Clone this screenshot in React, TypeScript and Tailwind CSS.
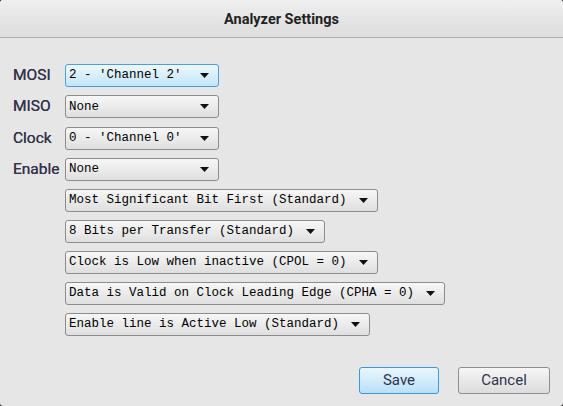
import React from "react";

const channels = [
  { label: "MOSI", value: "2 - 'Channel 2'", focused: true },
  { label: "MISO", value: "None" },
  { label: "Clock", value: "0 - 'Channel 0'" },
  { label: "Enable", value: "None" },
];

const options = [
  "Most Significant Bit First (Standard)",
  "8 Bits per Transfer (Standard)",
  "Clock is Low when inactive (CPOL = 0)",
  "Data is Valid on Clock Leading Edge (CPHA = 0)",
  "Enable line is Active Low (Standard)",
];

function Arrow() {
  return (
    <svg width="9" height="5" viewBox="0 0 9 5" className="shrink-0">
      <path d="M0 0h9L4.5 5z" fill="#111" />
    </svg>
  );
}

function Combo({ value, focused, wide }: { value: string; focused?: boolean; wide?: boolean }) {
  return (
    <div
      className={`h-[23px] flex items-center rounded-[3px] border pl-[3px] pr-[9px] ${
        wide ? "w-fit gap-3" : "w-[154px] justify-between"
      } ${
        focused
          ? "border-[#4a9fdc] bg-gradient-to-b from-[#eef8fe] to-[#c2e5f9]"
          : "border-[#8c8c8c] bg-gradient-to-b from-[#f7f7f7] to-[#dfdfdf]"
      }`}
    >
      <span className="text-[12.5px] leading-none text-[#000] whitespace-pre" style={{ fontFamily: "'Liberation Mono', monospace" }}>
        {value}
      </span>
      <Arrow />
    </div>
  );
}

export default function App() {
  return (
    <div className="w-[563px] h-[406px] bg-[#222]">
      <div className="w-full h-full rounded-[3px] overflow-hidden bg-[#e6e6e6] flex flex-col" style={{ fontFamily: "Roboto, sans-serif" }}>
        {/* title bar */}
        <div className="h-[38px] shrink-0 flex items-center justify-center border-b border-[#b2b2b2] bg-gradient-to-b from-[#efefef] to-[#dddddd]">
          <span className="text-[14.5px] font-bold text-[#222] pt-[2px]">Analyzer Settings</span>
        </div>

        <div className="flex flex-col pl-[12px] pt-[26px]">
          <div className="flex flex-col gap-[8px]">
            {channels.map((c) => (
              <div key={c.label} className="flex items-center">
                <span className="w-[53px] text-[15.5px] text-[#34344a] pl-px [text-shadow:0_0_0.4px_#34344a]">{c.label}</span>
                <Combo value={c.value} focused={c.focused} />
              </div>
            ))}
          </div>

          <div className="flex flex-col gap-[8px] pl-[53px] pt-[8px]">
            {options.map((o) => (
              <Combo key={o} value={o} wide />
            ))}
          </div>
        </div>

        {/* buttons */}
        <div className="flex justify-end gap-[19px] pr-[13px] pt-[31px]">
          <button className="w-[80px] h-[27px] rounded-[3px] border border-[#3b99d9] bg-gradient-to-b from-[#eaf6fd] to-[#b9e0f7] text-[15px] text-[#2d3550]">
            Save
          </button>
          <button className="w-[92px] h-[27px] rounded-[3px] border border-[#8f8f8f] bg-gradient-to-b from-[#f6f6f6] to-[#dcdcdc] text-[15px] text-[#2d3550]">
            Cancel
          </button>
        </div>
      </div>
    </div>
  );
}
